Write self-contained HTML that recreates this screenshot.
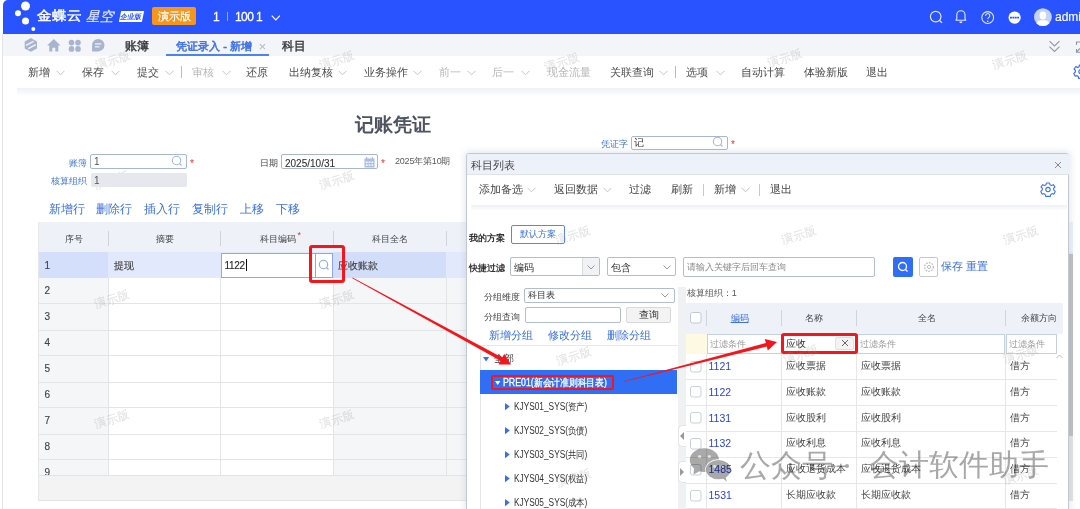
<!DOCTYPE html>
<html><head><meta charset="utf-8">
<style>
*{box-sizing:border-box;margin:0;padding:0}
html,body{width:1080px;height:509px;overflow:hidden;background:#fff;font-family:"Liberation Sans",sans-serif;color:#333}
.a{position:absolute;white-space:nowrap}
#hdr{position:absolute;left:3px;top:0;width:1077px;height:34px;background:#2953fe;border-top-left-radius:5px}
#tabs{position:absolute;left:3px;top:34px;width:1077px;height:22px;background:#f3f5f9}
#frame{position:absolute;left:2px;top:34px;width:1px;height:475px;background:#e3e4e7}
.tb{font-size:11px;color:#4a4a4a;top:64px;line-height:16px}
.tb.dis{color:#b8b8b8}
.chev{position:absolute;width:9px;height:5px}.chev::before{content:"";position:absolute;left:0;top:0;width:9px;height:5px;background:none}
.sep{position:absolute;width:1px;height:12px;background:#bbb}
.lbl{font-size:9px;line-height:12px}
.th{font-size:9.2px;line-height:12px;top:232.5px;color:#444}
.td{font-size:10px;line-height:14px;color:#444;-webkit-text-stroke:0.15px #444}
.dt{font-size:11px;line-height:16px;top:181px;color:#444}
.gh{font-size:9.2px;line-height:13px;top:312px;color:#444}
.gd{font-size:10px;line-height:14px;color:#444}
.wm{position:absolute;font-size:11.5px;line-height:14px;color:rgba(150,150,150,.2);-webkit-text-stroke:0.25px rgba(150,150,150,.2);transform:rotate(-18deg);white-space:nowrap;z-index:4}
</style></head><body>
<div id="hdr"></div>
<div id="tabs"></div>
<div id="frame"></div>

<!-- logo -->
<svg class="a" style="left:0;top:0" width="200" height="34">
  <circle cx="25.5" cy="6" r="4.5" fill="#fff"/>
  <circle cx="18" cy="13.3" r="3" fill="#fff"/>
  <circle cx="25.5" cy="21" r="3.5" fill="#fff"/>
  <circle cx="33.3" cy="29" r="2" fill="#fff"/>
</svg>
<div class="a" style="left:37px;top:6px;font-size:15px;line-height:20px;color:#fff;-webkit-text-stroke:0.5px #fff;transform:scaleY(.88);transform-origin:0 50%">金蝶云</div>
<div class="a" style="left:86px;top:6.5px;font-size:13.5px;line-height:20px;color:#e4eaff;font-style:italic;-webkit-text-stroke:0.2px #e4eaff">星空</div>
<div class="a" style="left:120px;top:11px;width:23px;height:11px;background:#fff;transform:skewX(-12deg);font-size:7px;line-height:11px;color:#2953fe;text-align:center;font-weight:bold">企业版</div>
<div class="a" style="left:152px;top:7px;width:44px;height:18px;background:#f8961c;border-radius:2px;font-size:10.5px;line-height:18px;color:#fff;text-align:center;-webkit-text-stroke:0.25px #fff">演示版</div>
<div class="a" style="left:213px;top:8.5px;font-size:12px;line-height:17px;color:#fff;-webkit-text-stroke:0.3px #fff">1</div>
<div class="a" style="left:227px;top:12px;width:1px;height:9px;background:rgba(255,255,255,.5)"></div>
<div class="a" style="left:235px;top:8.5px;font-size:12px;line-height:17px;color:#fff;-webkit-text-stroke:0.3px #fff;letter-spacing:-0.6px">100 1</div>
<svg class="a" style="left:271px;top:15px" width="10" height="6"><path d="M0.7 0.7 L4.8 4.8 L8.9 0.7" fill="none" stroke="#fff" stroke-width="1.2"/></svg>

<!-- header right icons -->
<svg class="a" style="left:900px;top:0" width="180" height="34">
  <g stroke="#fff" fill="none" opacity=".88">
    <circle cx="935.7" cy="16.6" r="5.3" stroke-width="1.15" transform="translate(-900 0)"/>
    <line x1="39.6" y1="20.5" x2="42" y2="22.9" stroke-width="1.2"/>
    <path d="M56 20.3 L56.8 18.8 L56.8 14.8 A4.1 4.1 0 0 1 65 14.8 L65 18.8 L65.8 20.3 Z" stroke-width="1.1" stroke-linejoin="round"/>
    <circle cx="87.7" cy="17.5" r="5.9" stroke-width="1.05"/>
    <path d="M85.6 15.9 A2.1 2.1 0 1 1 88.6 17.6 Q87.7 18.1 87.7 19.1" stroke-width="1.05"/>
  </g>
  <path d="M59.3 21.6 A1.6 1.6 0 0 0 62.5 21.6Z" fill="#fff" opacity=".88"/>
  <circle cx="87.7" cy="21.2" r=".75" fill="#fff"/>
  <circle cx="114.6" cy="17.6" r="6.1" fill="#fff"/>
  <line x1="110" y1="17.6" x2="119" y2="17.6" stroke="#2953fe" stroke-width="1.9" stroke-dasharray="1.9 0.5"/>
  <defs><clipPath id="avc"><circle cx="142.9" cy="17.1" r="8.9"/></clipPath></defs>
  <circle cx="142.9" cy="17.1" r="8.9" fill="#c5d1f5"/>
  <g clip-path="url(#avc)" fill="#fff">
    <ellipse cx="142.9" cy="15.6" rx="3.3" ry="4"/>
    <path d="M136 27 Q136 20.6 140.6 20.2 L145.2 20.2 Q149.8 20.6 149.8 27Z"/>
  </g>
</svg>
<div class="a" style="left:1055px;top:9px;font-size:12px;line-height:17px;color:#fff;-webkit-text-stroke:0.15px #fff">admin</div>
<!-- tab icons -->
<svg class="a" style="left:0;top:0" width="120" height="56" fill="#a9b4cf">
  <path d="M30.9 38.1 L37 41.5 L37 48.4 L30.9 51.8 L24.7 48.4 L24.7 41.5Z"/>
  <path d="M26 45.3 L33.5 41.3 M35.8 44.6 L28.3 48.6" fill="none" stroke="#f3f5f9" stroke-width="1.4"/>
  <path d="M53.8 38.9 L60.5 45.4 L58.3 45.4 L58.3 51.4 L55.3 51.4 L55.3 47.8 L52.3 47.8 L52.3 51.4 L49.3 51.4 L49.3 45.4 L47.1 45.4Z"/>
  <ellipse cx="71.5" cy="42.6" rx="2.8" ry="2.9"/><ellipse cx="78" cy="42.6" rx="2.8" ry="2.9"/>
  <ellipse cx="71.5" cy="48.9" rx="2.8" ry="2.9"/><ellipse cx="78" cy="48.9" rx="2.8" ry="2.9"/>
  <path d="M98.2 38.9 A6.1 6.1 0 1 1 98.2 51.4 L92.1 51.4 L92.1 45.2 A6.2 6.2 0 0 1 98.2 38.9Z"/>
  <rect x="95" y="43.3" width="6.3" height="1.2" fill="#f3f5f9"/>
  <rect x="95" y="46.2" width="4.5" height="1.2" fill="#f3f5f9"/>
</svg>
<div class="a" style="left:125px;top:38px;font-size:12px;line-height:17px;color:#333;-webkit-text-stroke:0.35px #333">账簿</div>
<div class="a" style="left:176px;top:38px;font-size:11.25px;line-height:17px;color:#3e6fe8;-webkit-text-stroke:0.5px #3e6fe8">凭证录入 - 新增</div>
<div class="a" style="left:258.5px;top:37.5px;font-size:13.5px;line-height:17px;color:#b5b9c2">×</div>
<div class="a" style="left:166px;top:53.5px;width:103px;height:2px;background:#4d82f0"></div>
<div class="a" style="left:282px;top:38px;font-size:12px;line-height:17px;color:#333;-webkit-text-stroke:0.35px #333">科目</div>
<svg class="a" style="left:0;top:0" width="1080" height="90">
  <path d="M1049.5 41.2 L1054.5 46 L1059.5 41.2 M1049.5 46.6 L1054.5 51.4 L1059.5 46.6" fill="none" stroke="#8e96a8" stroke-width="1.1"/>
  <path d="M1076.5 45 L1076.5 42 L1080 42 M1076.5 49 L1076.5 52.2 L1080 52.2 M1077 51.5 L1080 48.5" fill="none" stroke="#8e96a8" stroke-width="1.1"/>
  <g transform="translate(1081 71.6)"><path id="cog" d="M-1.6 -6.6 L1.6 -6.6 L2 -4.8 L3.6 -4 L5.2 -5 L7 -2.6 L5.6 -1.2 L5.8 0.6 L7.2 1.8 L5.8 4.6 L4 4 L2.6 5.2 L2.4 6.8 L-2.4 6.8 L-2.6 5.2 L-4 4 L-5.8 4.6 L-7.2 1.8 L-5.8 0.6 L-5.6 -1.2 L-7 -2.6 L-5.2 -5 L-3.6 -4 L-2 -4.8Z" fill="none" stroke="#3b73e8" stroke-width="1.2" stroke-linejoin="round"/><circle r="2.2" fill="none" stroke="#3b73e8" stroke-width="1.2"/></g>
</svg>

<!-- toolbar -->
<div class="a tb" style="left:28px">新增</div><svg class="a cv" style="left:56px;top:69.5px" width="9" height="6"><path d="M0.5 0.8 L4.5 4.8 L8.5 0.8" fill="none" stroke="#c4c4c4" stroke-width="1"/></svg>
<div class="a tb" style="left:82px">保存</div><svg class="a cv" style="left:110.5px;top:69.5px" width="9" height="6"><path d="M0.5 0.8 L4.5 4.8 L8.5 0.8" fill="none" stroke="#c4c4c4" stroke-width="1"/></svg>
<div class="a tb" style="left:137px">提交</div><svg class="a cv" style="left:165px;top:69.5px" width="9" height="6"><path d="M0.5 0.8 L4.5 4.8 L8.5 0.8" fill="none" stroke="#c4c4c4" stroke-width="1"/></svg>
<div class="sep" style="left:181px;top:66px"></div>
<div class="a tb dis" style="left:192px">审核</div><svg class="a cv" style="left:221.5px;top:69.5px" width="9" height="6"><path d="M0.5 0.8 L4.5 4.8 L8.5 0.8" fill="none" stroke="#c4c4c4" stroke-width="1"/></svg>
<div class="a tb" style="left:246px">还原</div>
<div class="a tb" style="left:289px">出纳复核</div><svg class="a cv" style="left:338px;top:69.5px" width="9" height="6"><path d="M0.5 0.8 L4.5 4.8 L8.5 0.8" fill="none" stroke="#c4c4c4" stroke-width="1"/></svg>
<div class="a tb" style="left:364px">业务操作</div><svg class="a cv" style="left:413px;top:69.5px" width="9" height="6"><path d="M0.5 0.8 L4.5 4.8 L8.5 0.8" fill="none" stroke="#c4c4c4" stroke-width="1"/></svg>
<div class="a tb dis" style="left:439px">前一</div><svg class="a cv" style="left:467px;top:69.5px" width="9" height="6"><path d="M0.5 0.8 L4.5 4.8 L8.5 0.8" fill="none" stroke="#c4c4c4" stroke-width="1"/></svg>
<div class="a tb dis" style="left:492px">后一</div><svg class="a cv" style="left:521px;top:69.5px" width="9" height="6"><path d="M0.5 0.8 L4.5 4.8 L8.5 0.8" fill="none" stroke="#c4c4c4" stroke-width="1"/></svg>
<div class="a tb dis" style="left:547px">现金流量</div>
<div class="a tb" style="left:610px">关联查询</div><svg class="a cv" style="left:659px;top:69.5px" width="9" height="6"><path d="M0.5 0.8 L4.5 4.8 L8.5 0.8" fill="none" stroke="#c4c4c4" stroke-width="1"/></svg>
<div class="sep" style="left:675px;top:66px"></div>
<div class="a tb" style="left:686px">选项</div><svg class="a cv" style="left:715.5px;top:69.5px" width="9" height="6"><path d="M0.5 0.8 L4.5 4.8 L8.5 0.8" fill="none" stroke="#c4c4c4" stroke-width="1"/></svg>
<div class="a tb" style="left:741px">自动计算</div>
<div class="a tb" style="left:804px">体验新版</div>
<div class="a tb" style="left:866px">退出</div>
<div class="a" style="left:17px;top:88px;width:1063px;height:7px;background:linear-gradient(#eef1f8,#fbfcfe)"></div>

<!-- form -->
<div class="a" style="left:354.5px;top:113px;font-size:19.3px;line-height:24px;color:#4e5360;font-weight:bold">记账凭证</div>
<div class="a lbl" style="left:68.5px;top:156.5px;color:#3f75d6">账簿</div>
<div class="a" style="left:90px;top:154.3px;width:97px;height:14.5px;border:1px solid #a9b6d3;border-radius:2px;background:#fff"></div>
<div class="a" style="left:94px;top:155px;font-size:10px;line-height:13px;color:#555">1</div>
<svg class="a" style="left:171px;top:155px" width="12" height="12"><circle cx="5.5" cy="5.5" r="4.2" fill="none" stroke="#a4b7e0" stroke-width="1.1"/><line x1="8.5" y1="8.5" x2="10.5" y2="10.5" stroke="#a4b7e0" stroke-width="1.1"/></svg>
<div class="a" style="left:190px;top:157.5px;font-size:10px;line-height:12px;color:#f03030">*</div>
<div class="a lbl" style="left:51px;top:175px;color:#3f75d6">核算组织</div>
<div class="a" style="left:91px;top:173.2px;width:95.5px;height:14px;border-radius:2px;background:#e6e8ee;z-index:4"></div>
<div class="a" style="left:94px;top:174px;font-size:10px;line-height:13px;color:#555;z-index:4">1</div>

<div class="a lbl" style="left:260px;top:157px;color:#444">日期</div>
<div class="a" style="left:281.4px;top:154.2px;width:97px;height:14.4px;border:1px solid #a9b6d3;border-radius:2px;background:#fff"></div>
<div class="a" style="left:285px;top:156.5px;font-size:10px;line-height:13px;color:#333;-webkit-text-stroke:0.1px #333">2025/10/31</div>
<svg class="a" style="left:364px;top:157px" width="11" height="11"><rect x="0.5" y="1.5" width="10" height="9" fill="#a9bde6"/><rect x="2" y="0" width="1.2" height="2.5" fill="#a9bde6"/><rect x="7.8" y="0" width="1.2" height="2.5" fill="#a9bde6"/><g fill="#fff"><rect x="1.8" y="4.5" width="1.8" height="1.5"/><rect x="4.6" y="4.5" width="1.8" height="1.5"/><rect x="7.4" y="4.5" width="1.8" height="1.5"/><rect x="1.8" y="7.3" width="1.8" height="1.5"/><rect x="4.6" y="7.3" width="1.8" height="1.5"/><rect x="7.4" y="7.3" width="1.8" height="1.5"/></g></svg>
<div class="a" style="left:381px;top:157.5px;font-size:10px;line-height:12px;color:#f03030">*</div>
<div class="a" style="left:395px;top:154px;font-size:9px;line-height:14px;color:#5a5a5a;letter-spacing:-0.2px">2025年第10期</div>

<div class="a lbl" style="left:601px;top:138px;color:#3f75d6">凭证字</div>
<div class="a" style="left:631.2px;top:135.5px;width:96.6px;height:14.8px;border:1px solid #a9b6d3;border-radius:2px;background:#fff"></div>
<div class="a" style="left:634px;top:136px;font-size:10px;line-height:13px;color:#333">记</div>
<svg class="a" style="left:712px;top:136px" width="12" height="12"><circle cx="5.5" cy="5.5" r="4.2" fill="none" stroke="#a4b7e0" stroke-width="1.1"/><line x1="8.5" y1="8.5" x2="10.5" y2="10.5" stroke="#a4b7e0" stroke-width="1.1"/></svg>
<div class="a" style="left:731px;top:138.5px;font-size:10px;line-height:12px;color:#f03030">*</div>

<!-- row actions -->
<div class="a" style="left:48.5px;top:201px;font-size:11.5px;line-height:16px;color:#3a70e0">新增行</div>
<div class="a" style="left:96px;top:201px;font-size:11.5px;line-height:16px;color:#3a70e0">删除行</div>
<div class="a" style="left:144px;top:201px;font-size:11.5px;line-height:16px;color:#3a70e0">插入行</div>
<div class="a" style="left:192px;top:201px;font-size:11.5px;line-height:16px;color:#3a70e0">复制行</div>
<div class="a" style="left:240px;top:201px;font-size:11.5px;line-height:16px;color:#3a70e0">上移</div>
<div class="a" style="left:276px;top:201px;font-size:11.5px;line-height:16px;color:#3a70e0">下移</div>

<!-- main table -->
<div class="a" style="left:38px;top:222px;width:1035px;height:30px;background:#eef1f8"></div>
<div class="a" style="left:38px;top:252px;width:1035px;height:26px;background:#e3e9fc"></div>
<div class="a" style="left:38px;top:252px;width:70px;height:26px;background:#d4dffb"></div>
<div class="a" style="left:333px;top:252px;width:113px;height:26px;background:#d2ddfa"></div>
<div class="a" style="left:38px;top:278px;width:70px;height:197px;background:#f5f6f8"></div>
<div class="a" style="left:333px;top:278px;width:740px;height:197px;background:#f5f6f8"></div>
<div class="a" style="left:38px;top:303px;width:1035px;height:1px;background:#e3e4e8"></div>
<div class="a" style="left:38px;top:330px;width:1035px;height:1px;background:#e3e4e8"></div>
<div class="a" style="left:38px;top:355px;width:1035px;height:1px;background:#e3e4e8"></div>
<div class="a" style="left:38px;top:382px;width:1035px;height:1px;background:#e3e4e8"></div>
<div class="a" style="left:38px;top:407px;width:1035px;height:1px;background:#e3e4e8"></div>
<div class="a" style="left:38px;top:434px;width:1035px;height:1px;background:#e3e4e8"></div>
<div class="a" style="left:38px;top:459px;width:1035px;height:1px;background:#e3e4e8"></div>
<div class="a" style="left:108px;top:231px;width:1px;height:15px;background:#d0d4dc"></div>
<div class="a" style="left:108px;top:278px;width:1px;height:197px;background:#e3e4e8"></div>
<div class="a" style="left:220px;top:231px;width:1px;height:15px;background:#d0d4dc"></div>
<div class="a" style="left:220px;top:278px;width:1px;height:197px;background:#e3e4e8"></div>
<div class="a" style="left:333px;top:231px;width:1px;height:15px;background:#d0d4dc"></div>
<div class="a" style="left:333px;top:278px;width:1px;height:197px;background:#e3e4e8"></div>
<div class="a" style="left:446px;top:231px;width:1px;height:15px;background:#d0d4dc"></div>
<div class="a" style="left:446px;top:278px;width:1px;height:197px;background:#e3e4e8"></div>
<div class="a" style="left:38px;top:475px;width:1035px;height:26px;background:#f3f3f3;border:1px solid #e4e4e4"></div>
<div class="a" style="left:38px;top:222px;width:1px;height:279px;background:#e8e8e8"></div>
<div class="a th" style="left:64.5px">序号</div>
<div class="a th" style="left:156px">摘要</div>
<div class="a th" style="left:259.5px">科目编码</div>
<div class="a" style="left:297.5px;top:229.5px;font-size:9px;line-height:10px;color:#f03030">*</div>
<div class="a th" style="left:372px">科目全名</div>
<div class="a td" style="left:44.5px;top:259px">1</div>
<div class="a td" style="left:44.5px;top:284px">2</div>
<div class="a td" style="left:44.5px;top:309.5px">3</div>
<div class="a td" style="left:44.5px;top:336px">4</div>
<div class="a td" style="left:44.5px;top:361.5px">5</div>
<div class="a td" style="left:44.5px;top:388px">6</div>
<div class="a td" style="left:44.5px;top:413.5px">7</div>
<div class="a td" style="left:44.5px;top:440px">8</div>
<div class="a td" style="left:44.5px;top:465.5px">9</div>
<div class="a td" style="left:113.5px;top:259px">提现</div>
<div class="a" style="left:221.3px;top:253px;width:111.7px;height:24.5px;border:1px solid #8ea6ee;background:#fff"></div>
<div class="a" style="left:315px;top:253px;width:1px;height:24.5px;background:#8ea6ee"></div>
<div class="a td" style="left:224.5px;top:259px;color:#222;letter-spacing:-0.35px">1122</div>
<div class="a" style="left:245.5px;top:259px;width:1px;height:12px;background:#111"></div>
<svg class="a" style="left:318px;top:259px" width="12" height="12"><circle cx="5.5" cy="5.5" r="4.2" fill="none" stroke="#8ea6ee" stroke-width="1.1"/><line x1="8.5" y1="8.5" x2="10.5" y2="10.5" stroke="#8ea6ee" stroke-width="1.1"/></svg>
<div class="a td" style="left:337.5px;top:259px">应收账款</div>
<div class="a" style="left:309px;top:244.5px;width:35.5px;height:38px;border:3px solid #f5161c;border-radius:3px"></div>
<div class="a" style="left:39px;top:475px;width:1034px;height:26px;background:#f3f3f3;border-top:1px solid #e4e4e4;border-bottom:1px solid #e4e4e4"></div>
<div class="a" style="left:1069px;top:254px;width:4px;height:182px;background:#bdbdbd"></div>
<div class="a" style="left:1069px;top:436px;width:4px;height:65px;background:#e2e2e2"></div>

<!-- dialog -->
<div class="a" style="left:465.5px;top:153.2px;width:603.5px;height:360px;background:#fff;border:1px solid #c3c7cf;border-radius:3px;box-shadow:0 0 5px 3px rgba(170,180,205,.22)"></div>
<div class="a" style="left:466.5px;top:154.2px;width:602px;height:20.8px;background:#edf1f9;border-bottom:1px solid #dfe3ec;border-radius:2px 2px 0 0"></div>
<div class="a" style="left:470.5px;top:157px;font-size:11px;line-height:16px;color:#444">科目列表</div>
<svg class="a" style="left:1054px;top:160.5px" width="8" height="8"><path d="M1 1 L7 7 M7 1 L1 7" stroke="#888" stroke-width="1"/></svg>
<div class="a dt" style="left:478.5px">添加备选</div>
<div class="a dt" style="left:554px">返回数据</div>
<div class="a dt" style="left:629px">过滤</div>
<div class="a dt" style="left:670.5px">刷新</div>
<div class="a dt" style="left:714px">新增</div>
<div class="a dt" style="left:769.5px">退出</div>
<div class="sep" style="left:702.5px;top:184px;background:#c8c8c8"></div>
<div class="sep" style="left:758.5px;top:184px;background:#c8c8c8"></div>
<svg class="a" style="left:527px;top:187px" width="9" height="6"><path d="M0.5 0.8 L4.5 4.8 L8.5 0.8" fill="none" stroke="#c4c4c4"/></svg>
<svg class="a" style="left:603px;top:187px" width="9" height="6"><path d="M0.5 0.8 L4.5 4.8 L8.5 0.8" fill="none" stroke="#c4c4c4"/></svg>
<svg class="a" style="left:741px;top:187px" width="9" height="6"><path d="M0.5 0.8 L4.5 4.8 L8.5 0.8" fill="none" stroke="#c4c4c4"/></svg>
<svg class="a" style="left:1040px;top:182px" width="16" height="16"><g transform="translate(8 7.6)"><path d="M-1.6 -6.6 L1.6 -6.6 L2 -4.8 L3.6 -4 L5.2 -5 L7 -2.6 L5.6 -1.2 L5.8 0.6 L7.2 1.8 L5.8 4.6 L4 4 L2.6 5.2 L2.4 6.8 L-2.4 6.8 L-2.6 5.2 L-4 4 L-5.8 4.6 L-7.2 1.8 L-5.8 0.6 L-5.6 -1.2 L-7 -2.6 L-5.2 -5 L-3.6 -4 L-2 -4.8Z" fill="none" stroke="#3b73e8" stroke-width="1.1" stroke-linejoin="round"/><circle r="2.2" fill="none" stroke="#3b73e8" stroke-width="1.1"/></g></svg>
<div class="a" style="left:471px;top:205px;width:596px;height:5px;background:linear-gradient(#eef1f7,#fbfcfd)"></div>

<div class="a" style="left:469.3px;top:232px;font-size:9px;line-height:12px;color:#333;font-weight:bold">我的方案</div>
<div class="a" style="left:511px;top:225px;width:53.5px;height:19.3px;border:1px solid #5a86ee;border-radius:2px;font-size:9px;line-height:17px;color:#3a6fe6;text-align:center">默认方案</div>
<div class="a" style="left:469.3px;top:262px;font-size:9px;line-height:12px;color:#333;font-weight:bold">快捷过滤</div>
<div class="a" style="left:510.4px;top:257.2px;width:89.2px;height:19px;border:1px solid #b3bdd0;border-radius:2px;background:#fff"></div>
<div class="a" style="left:582px;top:258.2px;width:16.6px;height:17px;background:#f1f2f4;border-left:1px solid #d5d9e0"></div>
<div class="a" style="left:514px;top:260.5px;font-size:9.5px;line-height:13px;color:#333">编码</div>
<svg class="a" style="left:587px;top:265px" width="8" height="5"><path d="M0.5 0.5 L4 4 L7.5 0.5" fill="none" stroke="#999"/></svg>
<div class="a" style="left:607.3px;top:257.2px;width:69px;height:19px;border:1px solid #b3bdd0;border-radius:2px;background:#fff"></div>
<div class="a" style="left:611px;top:260.5px;font-size:9.5px;line-height:13px;color:#333">包含</div>
<svg class="a" style="left:663px;top:265px" width="8" height="5"><path d="M0.5 0.5 L4 4 L7.5 0.5" fill="none" stroke="#999"/></svg>
<div class="a" style="left:683.1px;top:257.4px;width:192.2px;height:19.3px;border:1px solid #b3bdd0;border-radius:2px;background:#fff"></div>
<div class="a" style="left:686.5px;top:260.5px;font-size:9.2px;line-height:13px;color:#888">请输入关键字后回车查询</div>
<div class="a" style="left:893px;top:257.2px;width:20px;height:19.5px;background:#2f6ef5;border-radius:2px"></div>
<svg class="a" style="left:897px;top:261px" width="12" height="12"><circle cx="5.5" cy="5.5" r="4" fill="none" stroke="#fff" stroke-width="1.3"/><line x1="8.3" y1="8.3" x2="10.5" y2="10.5" stroke="#fff" stroke-width="1.3"/></svg>
<div class="a" style="left:919px;top:257.2px;width:19px;height:19.5px;border:1px solid #c3c8d2;border-radius:2px;background:#fff"></div>
<svg class="a" style="left:922.5px;top:261px" width="12" height="12"><circle cx="6" cy="6" r="4.3" fill="none" stroke="#bbb" stroke-width="1.3" stroke-dasharray="1.6 1.2"/><circle cx="6" cy="6" r="1.6" fill="none" stroke="#bbb"/></svg>
<div class="a" style="left:941px;top:259px;font-size:11px;line-height:15px;color:#3a70e0">保存</div>
<div class="a" style="left:965.5px;top:259px;font-size:11px;line-height:15px;color:#3a70e0">重置</div>

<!-- left pane -->
<div class="a" style="left:484px;top:290.5px;font-size:9.2px;line-height:13px;color:#444">分组维度</div>
<div class="a" style="left:524.2px;top:287.5px;width:150.5px;height:15px;border:1px solid #b3bdd0;border-radius:2px;background:#fff"></div>
<div class="a" style="left:527.5px;top:289px;font-size:9.2px;line-height:13px;color:#333">科目表</div>
<svg class="a" style="left:661px;top:293px" width="8" height="5"><path d="M0.5 0.5 L4 4 L7.5 0.5" fill="none" stroke="#999"/></svg>
<div class="a" style="left:484px;top:310.5px;font-size:9.2px;line-height:13px;color:#444">分组查询</div>
<div class="a" style="left:525px;top:307px;width:96px;height:16px;border:1px solid #b3bdd0;border-radius:2px;background:#fff"></div>
<div class="a" style="left:626px;top:307px;width:45px;height:16px;border:1px solid #d9d9d9;border-radius:2px;background:#f3f3f3;font-size:9.5px;line-height:14px;color:#333;text-align:center">查询</div>
<div class="a" style="left:488.5px;top:327px;font-size:11.2px;line-height:16px;color:#3a70e0">新增分组</div>
<div class="a" style="left:548px;top:327px;font-size:11.2px;line-height:16px;color:#3a70e0">修改分组</div>
<div class="a" style="left:606.5px;top:327px;font-size:11.2px;line-height:16px;color:#3a70e0">删除分组</div>
<div class="a" style="left:479.5px;top:344.5px;width:198px;height:1px;background:#e6e8ec"></div>
<div class="a" style="left:479.5px;top:345px;width:1px;height:170px;background:#e2e4e8"></div>
<svg class="a" style="left:483px;top:356.5px" width="7" height="5"><path d="M0 0 L6.2 0 L3.1 4.5Z" fill="#3a70e0"/></svg>
<div class="a" style="left:494px;top:352px;font-size:10px;line-height:14px;color:#333">全部</div>
<div class="a" style="left:480px;top:370.3px;width:197px;height:24px;background:#2f6ef5"></div>
<svg class="a" style="left:494.5px;top:380.5px" width="6" height="5"><path d="M0 0 L5.4 0 L2.7 4Z" fill="#fff"/></svg>
<div class="a" style="left:503px;top:375.5px;font-size:10px;line-height:14px;color:#fff;-webkit-text-stroke:0.3px #fff;transform:scaleX(.878);transform-origin:0 0">PRE01(新会计准则科目表)</div>
<div class="a" style="left:491px;top:375.3px;width:123px;height:14.5px;border:2.7px solid #f5161c;border-radius:2px"></div>
<svg class="a" style="left:505px;top:402.7px" width="6" height="8"><path d="M0 0 L4.8 3.6 L0 7.2Z" fill="#3a70e0"/></svg>
<div class="a" style="left:514px;top:399.5px;font-size:10px;line-height:14px;color:#333;transform:scaleX(.83);transform-origin:0 0">KJYS01_SYS(资产)</div>
<svg class="a" style="left:505px;top:426.7px" width="6" height="8"><path d="M0 0 L4.8 3.6 L0 7.2Z" fill="#3a70e0"/></svg>
<div class="a" style="left:514px;top:423.5px;font-size:10px;line-height:14px;color:#333;transform:scaleX(.83);transform-origin:0 0">KJYS02_SYS(负债)</div>
<svg class="a" style="left:505px;top:450.7px" width="6" height="8"><path d="M0 0 L4.8 3.6 L0 7.2Z" fill="#3a70e0"/></svg>
<div class="a" style="left:514px;top:447.5px;font-size:10px;line-height:14px;color:#333;transform:scaleX(.83);transform-origin:0 0">KJYS03_SYS(共同)</div>
<svg class="a" style="left:505px;top:474.7px" width="6" height="8"><path d="M0 0 L4.8 3.6 L0 7.2Z" fill="#3a70e0"/></svg>
<div class="a" style="left:514px;top:471.5px;font-size:10px;line-height:14px;color:#333;transform:scaleX(.83);transform-origin:0 0">KJYS04_SYS(权益)</div>
<svg class="a" style="left:505px;top:498.7px" width="6" height="8"><path d="M0 0 L4.8 3.6 L0 7.2Z" fill="#3a70e0"/></svg>
<div class="a" style="left:514px;top:495.5px;font-size:10px;line-height:14px;color:#333;transform:scaleX(.83);transform-origin:0 0">KJYS05_SYS(成本)</div>

<div class="a" style="left:677.6px;top:287px;width:8px;height:230px;background:#f0f1f3"></div>
<div class="a" style="left:677.5px;top:425px;width:8px;height:22px;background:#fff;border:1px solid #e3e5e9;border-right:none;border-radius:5px 0 0 5px"></div>
<svg class="a" style="left:680px;top:432px" width="5" height="8"><path d="M4 0 L0 4 L4 8Z" fill="#999"/></svg>
<div class="a" style="left:677.5px;top:461px;width:8px;height:22px;background:#fff;border:1px solid #e3e5e9;border-right:none;border-radius:5px 0 0 5px"></div>
<svg class="a" style="left:680px;top:468px" width="5" height="8"><path d="M0 0 L4 4 L0 8Z" fill="#999"/></svg>

<!-- right grid -->
<div class="a" style="left:686.8px;top:287px;font-size:9px;line-height:13px;color:#555">核算组织：1</div>
<div class="a" style="left:686px;top:303px;width:377px;height:30.5px;background:#eef1f8"></div>
<div class="a" style="left:686px;top:333.5px;width:370.5px;height:20px;background:#eef1f8"></div>
<div class="a" style="left:686px;top:333.5px;width:20.5px;height:20px;background:#fdf9e3"></div>
<div class="a" style="left:707px;top:333.5px;width:74.5px;height:20px;border:1px solid #c5d0e6;background:#fff;font-size:9.2px;line-height:18px;color:#999;padding-left:2px">过滤条件</div>
<div class="a" style="left:781.5px;top:333.5px;width:75px;height:20px;border:1px solid #c5d0e6;background:#fff;font-size:9.5px;line-height:18px;color:#333;padding-left:3px">应收</div>
<div class="a" style="left:835px;top:336.5px;width:19px;height:13px;background:#f3f3f3;border:1px solid #e0e0e0;border-radius:2px"></div>
<svg class="a" style="left:841px;top:339px" width="8" height="8"><path d="M1 1 L7 7 M7 1 L1 7" stroke="#666" stroke-width="1"/></svg>
<div class="a" style="left:856.5px;top:333.5px;width:148.5px;height:20px;border:1px solid #c5d0e6;background:#fff;font-size:9.2px;line-height:18px;color:#999;padding-left:2px">过滤条件</div>
<div class="a" style="left:1005.5px;top:333.5px;width:51px;height:20px;border:1px solid #c5d0e6;background:#fff;font-size:9.2px;line-height:18px;color:#999;padding-left:2px">过滤条件</div>
<div class="a" style="left:781px;top:333px;width:77px;height:21px;border:3px solid #f5161c;border-radius:3px"></div>
<svg class="a" style="left:689.8px;top:312px" width="12" height="12"><rect x="0.5" y="0.5" width="10.5" height="10.5" rx="2" fill="#fff" stroke="#c3c9d4"/></svg>
<div class="a" style="left:706px;top:310px;width:1px;height:16px;background:#d0d4dc"></div>
<div class="a" style="left:781px;top:310px;width:1px;height:16px;background:#d0d4dc"></div>
<div class="a" style="left:856px;top:310px;width:1px;height:16px;background:#d0d4dc"></div>
<div class="a" style="left:1005px;top:310px;width:1px;height:16px;background:#d0d4dc"></div>
<div class="a gh" style="left:730.5px;color:#3a70e0;text-decoration:underline">编码</div>
<div class="a gh" style="left:805px">名称</div>
<div class="a gh" style="left:918px">全名</div>
<div class="a gh" style="left:1020.5px">余额方向</div>
<div class="a" style="left:686px;top:379.3px;width:370.5px;height:1px;background:#e6e7ea"></div>
<svg class="a" style="left:689.8px;top:360.5px" width="12" height="12"><rect x="0.5" y="0.5" width="10.5" height="10.5" rx="2" fill="#fff" stroke="#c9ced8"/></svg>
<div class="a gd" style="left:708.5px;top:359.0px;color:#2b3fd6;font-size:10.5px">1121</div>
<div class="a gd" style="left:786px;top:359.0px">应收票据</div>
<div class="a gd" style="left:861px;top:359.0px">应收票据</div>
<div class="a gd" style="left:1010px;top:359.0px">借方</div>
<div class="a" style="left:686px;top:405.1px;width:370.5px;height:1px;background:#e6e7ea"></div>
<svg class="a" style="left:689.8px;top:386.3px" width="12" height="12"><rect x="0.5" y="0.5" width="10.5" height="10.5" rx="2" fill="#fff" stroke="#c9ced8"/></svg>
<div class="a gd" style="left:708.5px;top:384.8px;color:#2b3fd6;font-size:10.5px">1122</div>
<div class="a gd" style="left:786px;top:384.8px">应收账款</div>
<div class="a gd" style="left:861px;top:384.8px">应收账款</div>
<div class="a gd" style="left:1010px;top:384.8px">借方</div>
<div class="a" style="left:686px;top:430.90000000000003px;width:370.5px;height:1px;background:#e6e7ea"></div>
<svg class="a" style="left:689.8px;top:412.1px" width="12" height="12"><rect x="0.5" y="0.5" width="10.5" height="10.5" rx="2" fill="#fff" stroke="#c9ced8"/></svg>
<div class="a gd" style="left:708.5px;top:410.6px;color:#2b3fd6;font-size:10.5px">1131</div>
<div class="a gd" style="left:786px;top:410.6px">应收股利</div>
<div class="a gd" style="left:861px;top:410.6px">应收股利</div>
<div class="a gd" style="left:1010px;top:410.6px">借方</div>
<div class="a" style="left:686px;top:456.7px;width:370.5px;height:1px;background:#e6e7ea"></div>
<svg class="a" style="left:689.8px;top:437.9px" width="12" height="12"><rect x="0.5" y="0.5" width="10.5" height="10.5" rx="2" fill="#fff" stroke="#c9ced8"/></svg>
<div class="a gd" style="left:708.5px;top:436.4px;color:#2b3fd6;font-size:10.5px">1132</div>
<div class="a gd" style="left:786px;top:436.4px">应收利息</div>
<div class="a gd" style="left:861px;top:436.4px">应收利息</div>
<div class="a gd" style="left:1010px;top:436.4px">借方</div>
<div class="a" style="left:686px;top:482.5px;width:370.5px;height:1px;background:#e6e7ea"></div>
<svg class="a" style="left:689.8px;top:463.7px" width="12" height="12"><rect x="0.5" y="0.5" width="10.5" height="10.5" rx="2" fill="#fff" stroke="#c9ced8"/></svg>
<div class="a gd" style="left:708.5px;top:462.2px;color:#2b3fd6;font-size:10.5px">1485</div>
<div class="a gd" style="left:786px;top:462.2px">应收退货成本</div>
<div class="a gd" style="left:861px;top:462.2px">应收退货成本</div>
<div class="a gd" style="left:1010px;top:462.2px">借方</div>
<div class="a" style="left:686px;top:508.3px;width:370.5px;height:1px;background:#e6e7ea"></div>
<svg class="a" style="left:689.8px;top:489.5px" width="12" height="12"><rect x="0.5" y="0.5" width="10.5" height="10.5" rx="2" fill="#fff" stroke="#c9ced8"/></svg>
<div class="a gd" style="left:708.5px;top:488.0px;color:#2b3fd6;font-size:10.5px">1531</div>
<div class="a gd" style="left:786px;top:488.0px">长期应收款</div>
<div class="a gd" style="left:861px;top:488.0px">长期应收款</div>
<div class="a gd" style="left:1010px;top:488.0px">借方</div>
<div class="a" style="left:706px;top:353.5px;width:1px;height:160px;background:#e6e7ea"></div>
<div class="a" style="left:781px;top:353.5px;width:1px;height:160px;background:#e6e7ea"></div>
<div class="a" style="left:856px;top:353.5px;width:1px;height:160px;background:#e6e7ea"></div>
<div class="a" style="left:1005px;top:353.5px;width:1px;height:160px;background:#e6e7ea"></div>
<svg class="a" style="left:1055.5px;top:354px" width="7" height="5"><path d="M0.5 4 L3.5 1 L6.5 4" fill="none" stroke="#bbb"/></svg>

<!-- watermarks -->
<div class="wm" style="left:95px;top:53px">演示版</div>
<div class="wm" style="left:319px;top:53px">演示版</div>
<div class="wm" style="left:544px;top:55px">演示版</div>
<div class="wm" style="left:767px;top:51px">演示版</div>
<div class="wm" style="left:992px;top:53px">演示版</div>
<div class="wm" style="left:94px;top:173px;z-index:0">演示版</div>
<div class="wm" style="left:319px;top:173px">演示版</div>
<div class="wm" style="left:94px;top:292px">演示版</div>
<div class="wm" style="left:319px;top:292px">演示版</div>
<div class="wm" style="left:94px;top:412px">演示版</div>
<div class="wm" style="left:319px;top:412px">演示版</div>
<div class="wm" style="left:555px;top:228px">演示版</div>
<div class="wm" style="left:781px;top:228px">演示版</div>
<div class="wm" style="left:1003px;top:228px">演示版</div>
<div class="wm" style="left:556px;top:349px">演示版</div>
<div class="wm" style="left:783px;top:347px">演示版</div>
<div class="wm" style="left:1003px;top:347px">演示版</div>
<div class="wm" style="left:556px;top:471px">演示版</div>
<div class="wm" style="left:1003px;top:468px">演示版</div>

<!-- arrows -->
<svg class="a" style="left:0;top:0;z-index:5" width="1080" height="509"><polygon points="352.3,278.2 500.5,360.8 498.5,364.5 511.0,364.5 504.2,354.0 502.2,357.6 352.5,277.6" fill="#f5161c"/><polygon points="624.1,381.8 766.8,346.5 767.8,350.6 777.0,342.0 764.8,338.9 765.9,343.0 623.9,381.2" fill="#f5161c"/></svg>
<!-- wechat overlay -->
<svg class="a" style="left:680px;top:440px;z-index:6;mix-blend-mode:multiply" width="60" height="45">
 <ellipse cx="24.4" cy="20.1" rx="14.6" ry="11.8" fill="#a9a9a9"/>
 <path d="M14 28 L13.5 34.5 L21 30.5Z" fill="#a9a9a9"/>
 <circle cx="19.6" cy="16.6" r="1.6" fill="#e6e6e6"/><circle cx="29.3" cy="16.6" r="1.6" fill="#e6e6e6"/>
 <ellipse cx="38.4" cy="29.6" rx="13.2" ry="10.4" fill="#fff"/>
 <ellipse cx="38.4" cy="29.6" rx="12.4" ry="9.7" fill="#a9a9a9"/>
 <path d="M42 37.5 L46.8 41.8 L45.5 36Z" fill="#a9a9a9"/>
 <circle cx="34.6" cy="26.4" r="1.4" fill="#e6e6e6"/><circle cx="42" cy="26.4" r="1.4" fill="#e6e6e6"/>
</svg>
<div class="a" style="left:739.5px;top:446.5px;z-index:6;font-size:30.5px;line-height:36px;color:#a9a9a9;mix-blend-mode:multiply">公众号</div>
<div class="a" style="left:844.5px;top:463.5px;width:4.5px;height:4.5px;border-radius:50%;background:#a9a9a9;z-index:6;mix-blend-mode:multiply"></div>
<div class="a" style="left:869px;top:446.5px;z-index:6;font-size:29.6px;line-height:36px;color:#a9a9a9;mix-blend-mode:multiply">会计软件助手</div>
</body></html>
